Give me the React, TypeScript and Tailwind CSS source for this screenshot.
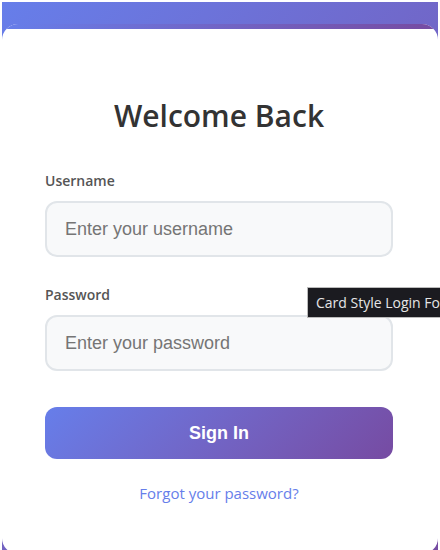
import React from "react";

const sans = { fontFamily: '"Open Sans", "Noto Sans", sans-serif' };
const arial = { fontFamily: '"Liberation Sans", Arial, sans-serif' };

export default function App() {
  return (
    <div className="relative h-[550px] overflow-hidden bg-white px-[2px] pt-[2px]">
      <div className="h-full bg-linear-135 from-[#667eea] to-[#764ba2] pt-[22px]">
        <div className="h-[530px] overflow-hidden rounded-2xl bg-white">
          <div className="h-[5px] bg-linear-to-r from-[#667eea] to-[#764ba2]" />
          <div className="pt-[67px] pr-[45px] pl-[43px]" style={sans}>
            <h1 className="mb-[35px] text-center text-[30px] leading-[40px] font-semibold text-[#333]">
              Welcome Back
            </h1>

            <div className="mb-[28px]">
              <label className="mb-[10px] block text-[14px] leading-[20px] font-semibold text-[#555]">
                Username
              </label>
              <input
                type="text"
                placeholder="Enter your username"
                className="h-[56px] w-full rounded-xl border-2 border-[#e1e5e9] bg-[#f8f9fa] px-[18px] text-[18px] text-[#333] outline-none placeholder:text-[#757575]"
                style={arial}
              />
            </div>

            <div className="mb-[36px]">
              <label className="mb-[10px] block text-[14px] leading-[20px] font-semibold text-[#555]">
                Password
              </label>
              <input
                type="password"
                placeholder="Enter your password"
                className="h-[56px] w-full rounded-xl border-2 border-[#e1e5e9] bg-[#f8f9fa] px-[18px] text-[18px] text-[#333] outline-none placeholder:text-[#757575]"
                style={arial}
              />
            </div>

            <button
              className="h-[52px] w-full rounded-xl bg-linear-135 from-[#667eea] to-[#764ba2] text-[18px] font-bold text-white"
              style={arial}
            >
              Sign In
            </button>

            <div className="mt-[22px] text-center">
              <a className="text-[15px] leading-[20px] text-[#667eea]">Forgot your password?</a>
            </div>
          </div>
        </div>
      </div>

      <div
        className="absolute top-[287px] left-[307px] border border-[#bbb] bg-[#1b1b20] py-[5px] pr-2 pl-[8px] text-[14px] leading-[19px] whitespace-nowrap text-[#e6e6e6]"
        style={sans}
      >
        Card Style Login Form
      </div>
    </div>
  );
}
